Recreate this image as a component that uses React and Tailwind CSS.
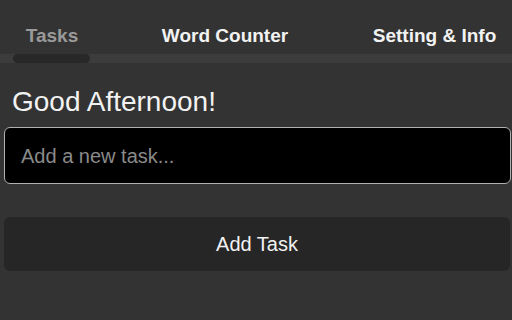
export default function App() {
  return (
    <div className="w-[512px] h-[320px] bg-[#333333] overflow-hidden" style={{ fontFamily: '"Liberation Sans", Arial, sans-serif' }}>
      <div className="flex items-end h-[54px] pb-[7px]">
        <div className="w-[104px] flex justify-center text-[19px] font-bold text-[#9a9a9a] leading-[22px]">Tasks</div>
        <div className="w-[242px] flex justify-center text-[19px] font-bold text-[#f2f2f2] leading-[22px]">Word Counter</div>
        <div className="flex-1 flex justify-center pl-[11px] text-[19px] font-bold text-[#f2f2f2] leading-[22px] whitespace-nowrap">Setting &amp; Info</div>
      </div>
      <div className="h-[9px] bg-[#3c3c3c] flex">
        <div className="ml-[13px] w-[77px] h-full rounded-full bg-[#282828]"></div>
      </div>
      <div className="mt-[23px] pl-[12px] text-[28px] leading-[32px] text-[#f2f2f2]">Good Afternoon!</div>
      <div className="mt-[9px] ml-[4px] w-[507px] h-[57px] rounded-[6px] border border-[#b0b0b0] bg-black flex items-center pl-[16px] text-[20px] text-[#8a8a8a]">
        Add a new task...
      </div>
      <div className="mt-[33px] ml-[4px] w-[506px] h-[54px] rounded-[6px] bg-[#262626] flex items-center justify-center text-[20px] text-[#f2f2f2]">
        Add Task
      </div>
    </div>
  );
}
